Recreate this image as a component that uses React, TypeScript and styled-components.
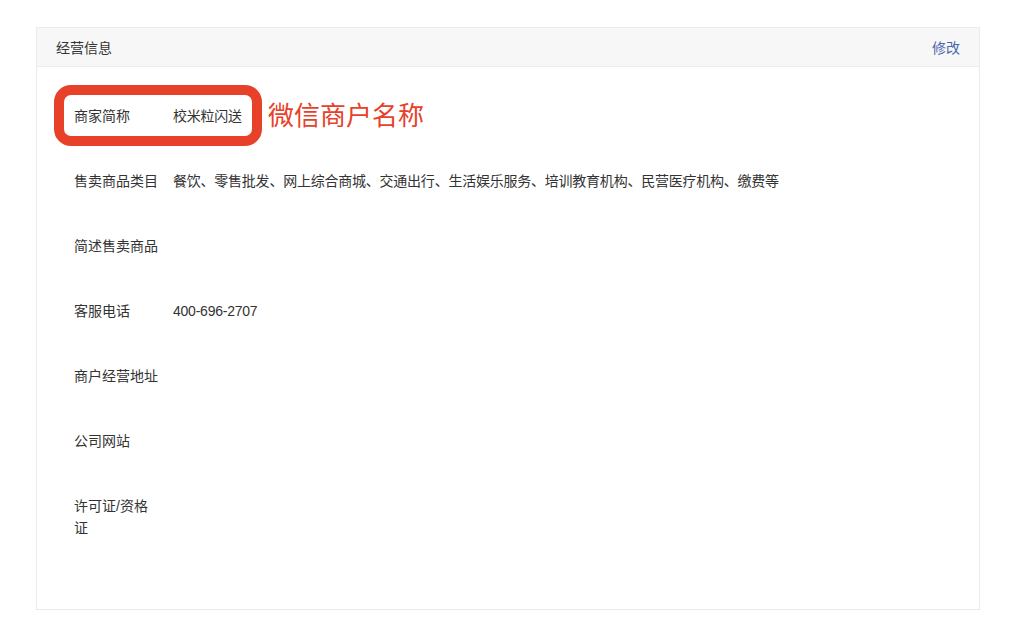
import React from "react";
import styled, { createGlobalStyle } from "styled-components";

const Global = createGlobalStyle`
  html, body { margin: 0; padding: 0; background: #ffffff; }
  body {
    font-family: "Liberation Sans", "Noto Sans CJK SC", sans-serif;
    color: #333333;
    -webkit-font-smoothing: antialiased;
  }
`;

const Page = styled.div`
  padding: 27px 44px 15px 36px;
`;

const Card = styled.section`
  border: 1px solid #ebebeb;
  background: #ffffff;
`;

const Header = styled.header`
  height: 38px;
  display: flex;
  align-items: center;
  justify-content: space-between;
  padding: 0 19px 0 19px;
  background: #f7f7f7;
  border-bottom: 1px solid #ededed;
`;

const Title = styled.h2`
  margin: 0;
  font-size: 14px;
  font-weight: 400;
  color: #333333;
`;

const EditLink = styled.a`
  font-size: 14px;
  color: #4a68ad;
  text-decoration: none;
  cursor: pointer;
`;

const Body = styled.div`
  padding: 38px 20px 70px 37px;
  display: flex;
  flex-direction: column;
  gap: 43px;
`;

const Row = styled.div`
  position: relative;
  display: flex;
  font-size: 14px;
  line-height: 22px;
`;

const Label = styled.div`
  width: 84px;
  flex: none;
  margin-right: 15px;
  color: #333333;
`;

const Value = styled.div`
  color: #333333;
  letter-spacing: -0.23px;
`;

const Highlight = styled.div`
  position: absolute;
  left: -20px;
  top: -20px;
  width: 208px;
  height: 61px;
  box-sizing: border-box;
  border: 10px solid #e8412a;
  border-radius: 17px;
  pointer-events: none;
`;

const Callout = styled.span`
  position: absolute;
  left: 194px;
  top: 50%;
  transform: translateY(-50%);
  font-size: 26px;
  line-height: 30px;
  color: #e8412a;
  white-space: nowrap;
`;

const rows: { label: string; value?: string; highlight?: boolean }[] = [
  { label: "商家简称", value: "校米粒闪送", highlight: true },
  {
    label: "售卖商品类目",
    value:
      "餐饮、零售批发、网上综合商城、交通出行、生活娱乐服务、培训教育机构、民营医疗机构、缴费等",
  },
  { label: "简述售卖商品" },
  { label: "客服电话", value: "400-696-2707" },
  { label: "商户经营地址" },
  { label: "公司网站" },
  { label: "许可证/资格证" },
];

export default function App() {
  return (
    <>
      <Global />
      <Page>
        <Card>
          <Header>
            <Title>经营信息</Title>
            <EditLink>修改</EditLink>
          </Header>
          <Body>
            {rows.map((r) => (
              <Row key={r.label}>
                <Label>{r.label}</Label>
                {r.value && <Value>{r.value}</Value>}
                {r.highlight && (
                  <>
                    <Highlight />
                    <Callout>微信商户名称</Callout>
                  </>
                )}
              </Row>
            ))}
          </Body>
        </Card>
      </Page>
    </>
  );
}
